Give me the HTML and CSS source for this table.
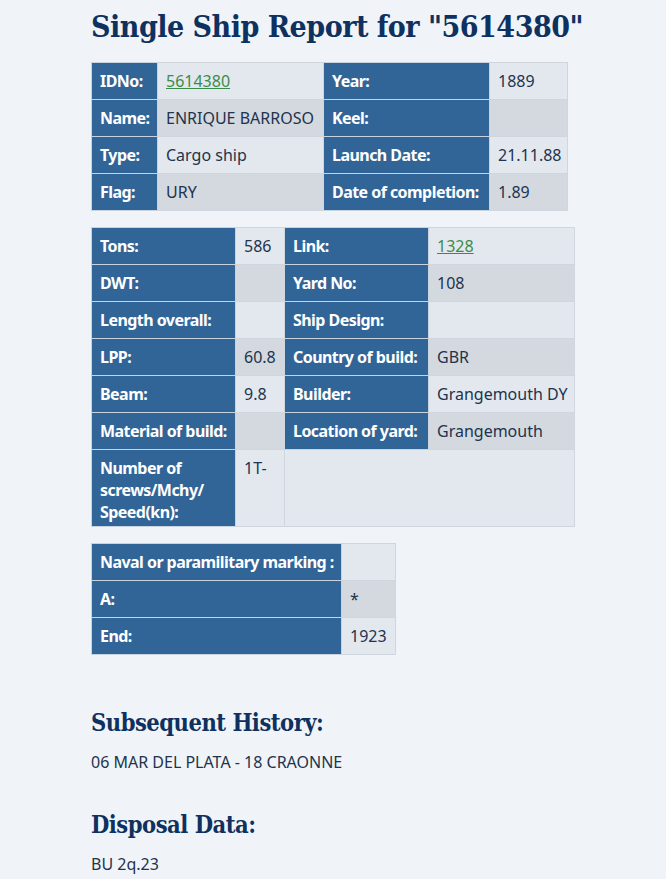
FILE: index.html
```html
<!DOCTYPE html>
<html>
<head>
<meta charset="utf-8">
<link rel="stylesheet" href="styles.css">
</head>
<body>
<main class="page">
  <h1 class="title">Single Ship Report for "5614380"</h1>

  <table class="grid grid-a">
    <colgroup><col class="a1"><col class="a2"><col class="a3"><col class="a4"></colgroup>
    <tr class="odd"><th>IDNo:</th><td><a href="#">5614380</a></td><th>Year:</th><td>1889</td></tr>
    <tr class="even"><th>Name:</th><td>ENRIQUE BARROSO</td><th>Keel:</th><td></td></tr>
    <tr class="odd"><th>Type:</th><td>Cargo ship</td><th>Launch Date:</th><td>21.11.88</td></tr>
    <tr class="even"><th>Flag:</th><td>URY</td><th>Date of completion:</th><td>1.89</td></tr>
  </table>

  <table class="grid grid-b">
    <colgroup><col class="b1"><col class="b2"><col class="b3"><col class="b4"></colgroup>
    <tr class="odd"><th>Tons:</th><td>586</td><th>Link:</th><td><a href="#">1328</a></td></tr>
    <tr class="even"><th>DWT:</th><td></td><th>Yard No:</th><td>108</td></tr>
    <tr class="odd"><th>Length overall:</th><td></td><th>Ship Design:</th><td></td></tr>
    <tr class="even"><th>LPP:</th><td>60.8</td><th>Country of build:</th><td>GBR</td></tr>
    <tr class="odd"><th>Beam:</th><td>9.8</td><th>Builder:</th><td>Grangemouth DY</td></tr>
    <tr class="even"><th>Material of build:</th><td></td><th>Location of yard:</th><td>Grangemouth</td></tr>
    <tr class="odd tall"><th class="wrap">Number of screws/Mchy/ Speed(kn):</th><td>1T-</td><td colspan="2"></td></tr>
  </table>

  <table class="grid grid-c">
    <colgroup><col class="c1"><col class="c2"></colgroup>
    <tr class="odd"><th>Naval or paramilitary marking :</th><td></td></tr>
    <tr class="even"><th>A:</th><td>*</td></tr>
    <tr class="odd"><th>End:</th><td>1923</td></tr>
  </table>

  <h2 class="section section-first">Subsequent History:</h2>
  <p class="text">06 MAR DEL PLATA - 18 CRAONNE</p>

  <h2 class="section">Disposal Data:</h2>
  <p class="text">BU 2q.23</p>
</main>
</body>
</html>
```

FILE: styles.css
```css
html, body {
  margin: 0;
  padding: 0;
  background: #f0f4f8;
}
body {
  font-family: "Noto Sans", "Open Sans", sans-serif;
  color: #1c2f4a;
}
.page {
  padding: 0 0 0 91px;
}
.title {
  font-family: "DejaVu Serif Condensed", "DejaVu Serif", serif;
  font-stretch: condensed;
  font-weight: bold;
  font-size: 30px;
  line-height: 40px;
  color: #0e3160;
  margin: 0;
  padding: 7px 0 15px 0;
  letter-spacing: -0.5px;
}
.grid {
  border-collapse: collapse;
  table-layout: fixed;
  font-size: 16px;
  line-height: 22px;
  margin: 0 0 16px 0;
  border: 1px solid #c9ced4;
}
.grid th, .grid td {
  padding: 7px 8px;
  border: 1px solid #d0d6dd;
  text-align: left;
  vertical-align: middle;
  white-space: nowrap;
}
.grid th {
  background: #316597;
  color: #ffffff;
  font-weight: 700;
  letter-spacing: -0.55px;
  border-color: #c8d3df;
}
.grid td {
  color: #22334d;
  font-weight: 400;
}
.grid tr.odd td { background: #e3e8ef; }
.grid tr.even td { background: #d4d9df; }
.grid th.wrap { white-space: normal; }
.grid tr.tall td, .grid tr.tall th {
  vertical-align: top;
  padding-bottom: 3px;
}
.grid a {
  color: #3b8c4c;
  text-decoration: underline;
}
.grid-a { width: 476px; }
.a1 { width: 66px; } .a2 { width: 166px; } .a3 { width: 166px; } .a4 { width: 78px; }
.grid-b { width: 483px; }
.b1 { width: 144px; } .b2 { width: 49px; } .b3 { width: 144px; } .b4 { width: 146px; }
.grid-c { width: 304px; }
.c1 { width: 250px; } .c2 { width: 54px; }
.section {
  font-family: "DejaVu Serif Condensed", "DejaVu Serif", serif;
  font-stretch: condensed;
  font-weight: bold;
  font-size: 23.5px;
  line-height: 30px;
  color: #0e3160;
  margin: 37px 0 0 0;
  letter-spacing: -0.5px;
}
.section-first { margin-top: 53px; }
.text {
  font-size: 16px;
  line-height: 22px;
  margin: 13px 0 0 0;
  color: #22334d;
}
```
